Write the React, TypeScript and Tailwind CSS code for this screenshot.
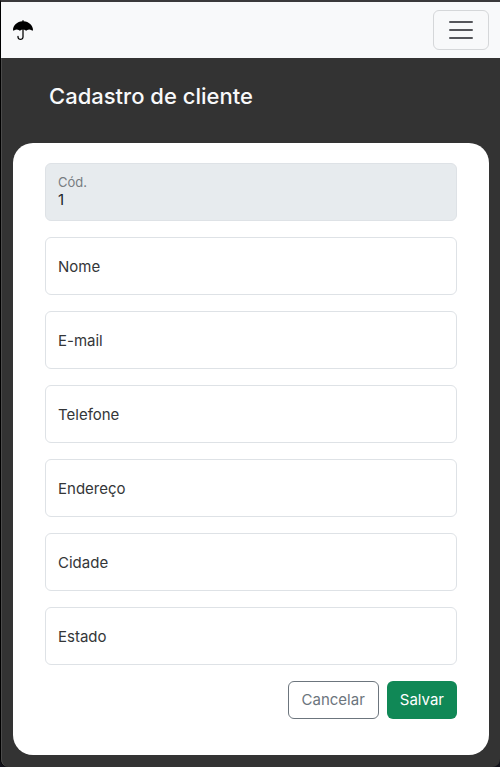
import { BsUmbrellaFill } from "react-icons/bs";

const fields = [
  { id: "nome", label: "Nome", type: "text" },
  { id: "email", label: "E-mail", type: "email" },
  { id: "telefone", label: "Telefone", type: "tel" },
  { id: "endereco", label: "Endereço", type: "text" },
  { id: "cidade", label: "Cidade", type: "text" },
  { id: "estado", label: "Estado", type: "text" },
];

function Navbar() {
  return (
    <nav className="flex h-14 items-center justify-between bg-[#f8f9fa] pr-[11px] pl-3">
      <a href="#" aria-label="Início" className="text-black">
        <BsUmbrellaFill size={20} />
      </a>
      <button
        type="button"
        aria-label="Abrir menu"
        className="flex h-10 w-14 items-center justify-center rounded-md border border-[#d5d7d9]"
      >
        <svg viewBox="0 0 30 30" className="size-[30px]" fill="none" stroke="#55565b" strokeWidth="2" strokeLinecap="round">
          <path d="M4 7h22M4 15h22M4 23h22" />
        </svg>
      </button>
    </nav>
  );
}

function FloatingField({ id, label, type }: { id: string; label: string; type: string }) {
  return (
    <div className="relative">
      <input
        id={id}
        type={type}
        placeholder=" "
        className="peer block h-[58px] w-full rounded-md border border-[#dee2e6] bg-white px-3 pt-[26px] pb-[10px] text-[#212529] outline-none focus:border-[#86b7fe]"
      />
      <label
        htmlFor={id}
        className="pointer-events-none absolute inset-y-0 left-[13px] flex items-center pt-0.5 text-[#343638] peer-focus:bottom-5 peer-focus:text-[13px] peer-[:not(:placeholder-shown)]:bottom-5 peer-[:not(:placeholder-shown)]:text-[13px]"
      >
        {label}
      </label>
    </div>
  );
}

export default function App() {
  return (
    <div className="bg-[#11111a]">
      <div className="min-h-screen rounded-b-lg border-t-2 border-l border-t-[#3a393b] border-l-black bg-[#333333] font-['Inter','Liberation_Sans',sans-serif] text-[15px] leading-6">
        <Navbar />
        <main className="rounded-b-lg border-l border-[#4b4b4b] pr-[11px] pb-3 pl-[11px]">
          <h1 className="px-9 pt-6 pb-8 text-[22px] leading-[29px] font-medium text-[#f8f9fa]">Cadastro de cliente</h1>
          <form className="flex flex-col gap-4 rounded-[20px] bg-white px-8 pt-5 pb-9">
            <div className="flex h-[58px] flex-col justify-center rounded-md border border-[#dee2e6] bg-[#e7ebee] px-3">
              <label htmlFor="codigo" className="text-[13px] leading-4 text-[#777c81]">
                Cód.
              </label>
              <input id="codigo" readOnly value="1" className="block h-5 w-full bg-transparent leading-5 text-[#212529] outline-none" />
            </div>
            {fields.map((field) => (
              <FloatingField key={field.id} {...field} />
            ))}
            <div className="flex justify-end gap-2">
              <button type="button" className="h-[38px] rounded-md border border-[#6c757d] px-[13px] text-[#6c757d]">
                Cancelar
              </button>
              <button type="submit" className="h-[38px] rounded-md bg-[#108856] px-[13px] text-white">
                Salvar
              </button>
            </div>
          </form>
        </main>
      </div>
    </div>
  );
}
